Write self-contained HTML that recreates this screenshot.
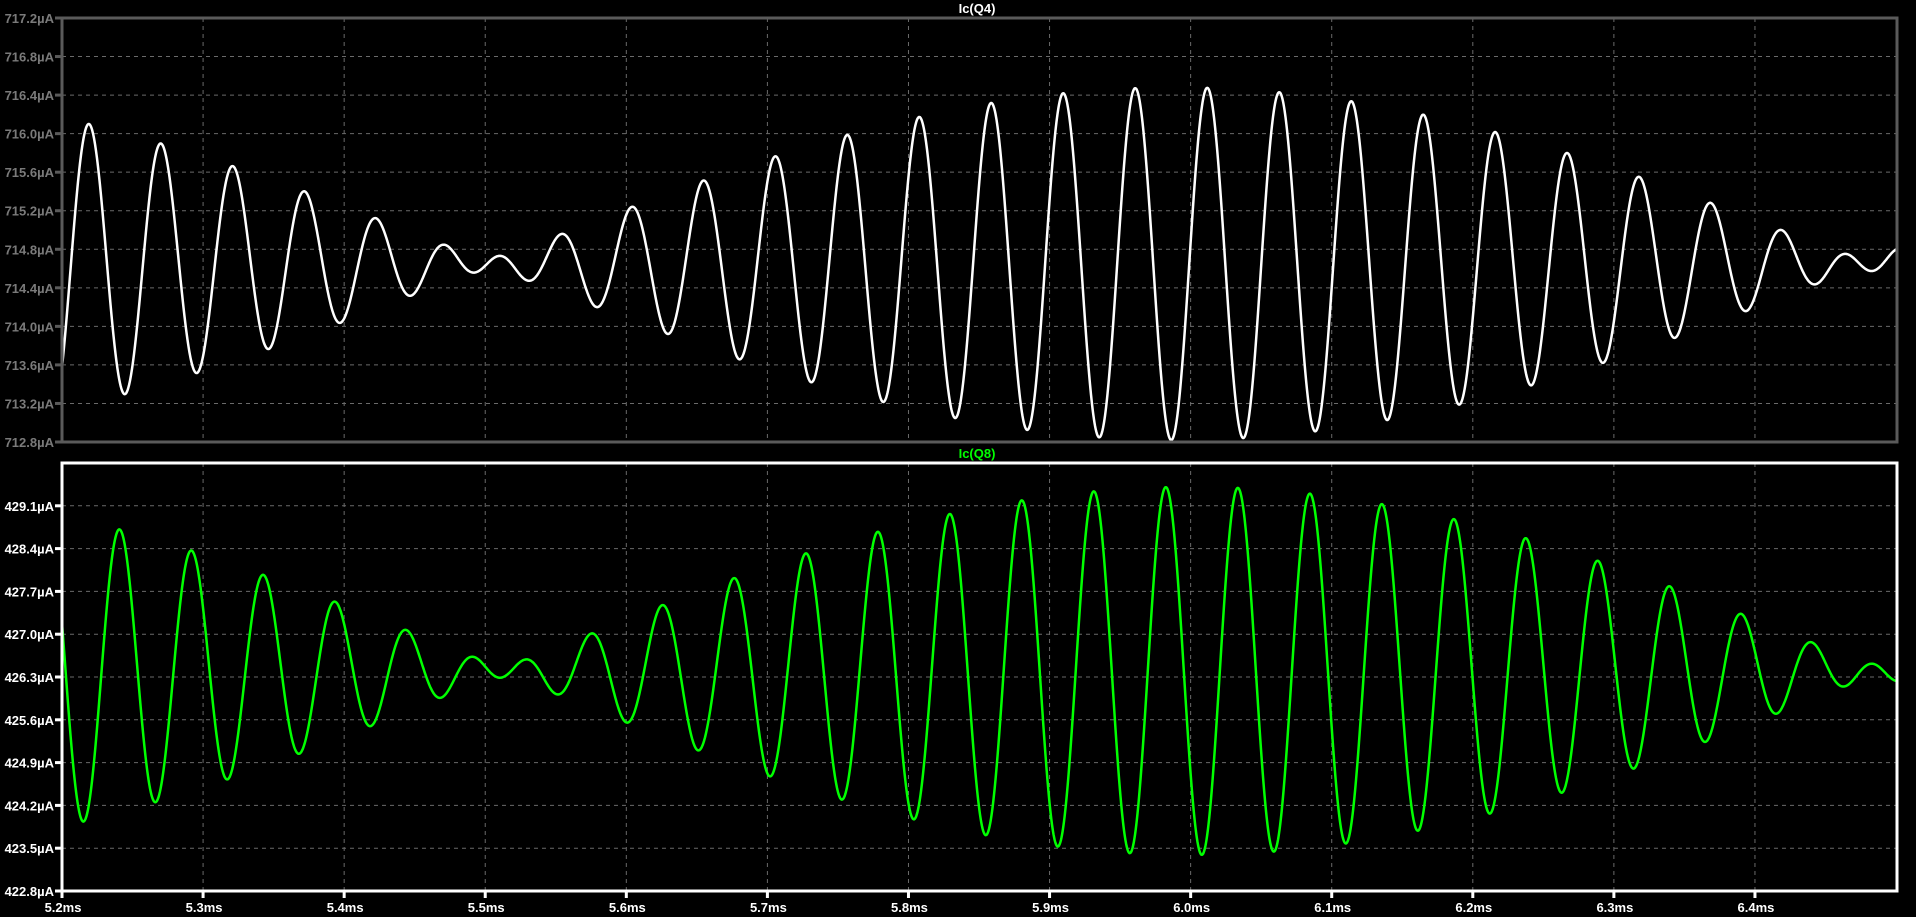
<!DOCTYPE html>
<html><head><meta charset="utf-8"><style>
html,body{margin:0;padding:0;background:#000;width:1916px;height:917px;overflow:hidden}
svg{display:block}
text{font-family:"Liberation Sans",sans-serif;font-weight:bold;font-size:13px}
</style></head><body>
<svg id="s" width="1916" height="917" xmlns="http://www.w3.org/2000/svg"></svg>
<script>
const s=document.getElementById('s');const NS='http://www.w3.org/2000/svg';
function el(t,a,txt){const e=document.createElementNS(NS,t);for(const k in a)e.setAttribute(k,a[k]);if(txt!==undefined)e.textContent=txt;s.appendChild(e);return e;}
const X0=62,X1=1897,px=141.08;
function tx(t){return X0+(t-5.2)/0.1*px;}
function pane(y0,y1,vTop,vBot,step,axisCol,labCol,title,titleCol,wave,col,showX,skipTop){
  const n=Math.round((vTop-vBot)/step);
  for(let i=0;i<=n;i++){const v=vBot+i*step;const y=y1-(v-vBot)/(vTop-vBot)*(y1-y0);
    if(skipTop&&i==n)continue;
    if(y>y0+2&&y<y1-2)el('line',{x1:X0,x2:X1,y1:y,y2:y,stroke:'#6a6a6a','stroke-width':1,'stroke-dasharray':'4 4'});
    el('line',{x1:55,x2:X0,y1:y,y2:y,stroke:axisCol,'stroke-width':3});
    el('text',{x:54,y:y+5,'text-anchor':'end',fill:labCol},v.toFixed(1)+'µA');}
  for(let k=1;k<=12;k++){const x=tx(5.2+k*0.1);
    el('line',{x1:x,x2:x,y1:y0,y2:y1,stroke:'#6a6a6a','stroke-width':1,'stroke-dasharray':'4 4'});
    if(showX)el('line',{x1:x,x2:x,y1:y1,y2:y1+7,stroke:axisCol,'stroke-width':3});}
  if(showX){for(let k=0;k<=12;k++){const x=tx(5.2+k*0.1);el('text',{x:x+1,y:y1+21,'text-anchor':'middle',fill:'#fff'},(5.2+k*0.1).toFixed(1)+'ms');}
    el('line',{x1:X0,x2:X0,y1:y1,y2:y1+7,stroke:axisCol,'stroke-width':3});}
  let d='';const [c,a1,a2,tp,te]=wave;const fc=19.56,df=1.026;
  for(let x=X0;x<=X1;x+=0.5){const t=5.2+(x-X0)/px*0.1;
    const ph=2*Math.PI*fc*(t-tp),pe=Math.PI*df*(t-te);
    const v=c+a1*Math.cos(ph+pe)+a2*Math.cos(ph-pe);
    const y=y1-(v-vBot)/(vTop-vBot)*(y1-y0);
    d+=(d?'L':'M')+x.toFixed(1)+' '+y.toFixed(1);}
  el('path',{d:d,fill:'none',stroke:col,'stroke-width':2.5,'stroke-linejoin':'round'});
  el('rect',{x:X0,y:y0,width:X1-X0,height:y1-y0,fill:'none',stroke:axisCol,'stroke-width':3});
  el('text',{x:977,y:y0-5,'text-anchor':'middle',fill:titleCol},title);
}
pane(18,442,717.2,712.8,0.4,'#5a5a5a','#7a7a7a','Ic(Q4)','#fff',[714.65,0.95,0.88,6.0118,5.99],'#fff',false,false);
pane(463,891,429.8,422.8,0.7,'#fff','#fff','Ic(Q8)','#00ff00',[426.4,1.56,1.45,6.0335,6.0],'#00ff00',true,true);
</script>
</body></html>
